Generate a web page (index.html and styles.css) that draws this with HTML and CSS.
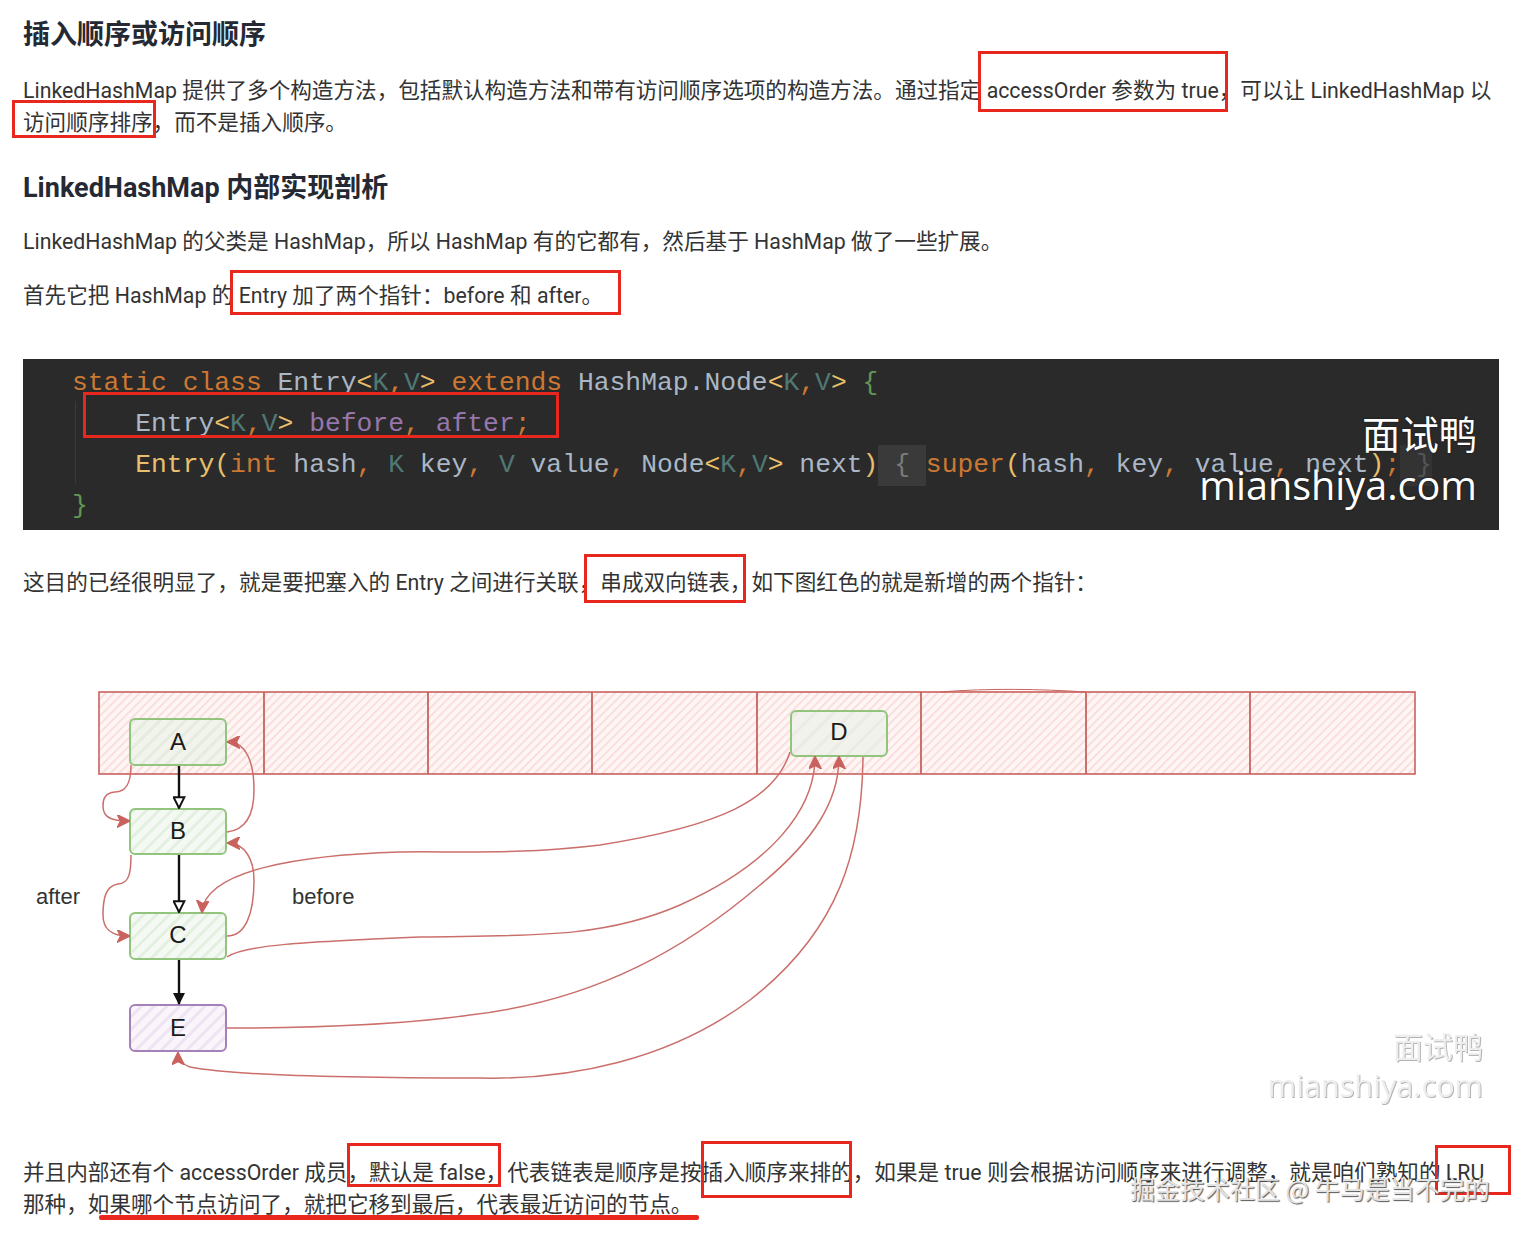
FILE: index.html
```html
<!DOCTYPE html>
<html lang="zh-CN">
<head>
<meta charset="utf-8">
<title>LinkedHashMap</title>
<link rel="stylesheet" href="styles.css">
</head>
<body>
<main class="article">
  <h3 class="heading heading-first">插入顺序或访问顺序</h3>
  <p class="para para-a"><span class="en">LinkedHashMap</span> 提供了多个构造方法，包括默认构造方法和带有访问顺序选项的构造方法。通过指定 <span class="en">accessOrder</span> 参数为 <span class="en">true</span>，可以让 <span class="en">LinkedHashMap</span> 以访问顺序排序，而不是插入顺序。</p>
  <h3 class="heading heading-second">LinkedHashMap 内部实现剖析</h3>
  <p class="para para-b"><span class="en">LinkedHashMap</span> 的父类是 <span class="en">HashMap</span>，所以 <span class="en">HashMap</span> 有的它都有，然后基于 <span class="en">HashMap</span> 做了一些扩展。</p>
  <p class="para para-c">首先它把 <span class="en">HashMap</span> 的 <span class="en">Entry</span> 加了两个指针：<span class="en">before</span> 和 <span class="en">after</span>。</p>

  <figure class="code-figure">
    <span class="code-guide"></span>
    <pre class="code"><span class="kw">static class</span> <span class="tx">Entry</span><span class="yl">&lt;</span><span class="tp">K</span><span class="kw">,</span><span class="tp">V</span><span class="yl">&gt;</span> <span class="kw">extends</span> <span class="tx">HashMap.Node</span><span class="yl">&lt;</span><span class="tp">K</span><span class="kw">,</span><span class="tp">V</span><span class="yl">&gt;</span> <span class="gr">{</span>
    <span class="tx">Entry</span><span class="yl">&lt;</span><span class="tp">K</span><span class="kw">,</span><span class="tp">V</span><span class="yl">&gt;</span> <span class="pu">before</span><span class="kw">,</span> <span class="pu">after</span><span class="kw">;</span>
    <span class="yl">Entry(</span><span class="kw">int</span> <span class="tx">hash</span><span class="kw">,</span> <span class="tp">K</span> <span class="tx">key</span><span class="kw">,</span> <span class="tp">V</span> <span class="tx">value</span><span class="kw">,</span> <span class="tx">Node</span><span class="yl">&lt;</span><span class="tp">K</span><span class="kw">,</span><span class="tp">V</span><span class="yl">&gt;</span> <span class="tx">next</span><span class="yl">)</span><span class="hl"> { </span><span class="kw">super</span><span class="yl">(</span><span class="tx">hash</span><span class="kw">,</span> <span class="tx">key</span><span class="kw">,</span> <span class="tx">value</span><span class="kw">,</span> <span class="tx">next</span><span class="yl">)</span><span class="kw">;</span><span class="hl hl-end"> }</span>
<span class="gr">}</span></pre>
    <div class="wm-code">
      <span class="wm-code-cn">面试鸭</span>
      <span class="wm-code-en">mianshiya.com</span>
    </div>
  </figure>

  <p class="para para-d">这目的已经很明显了，就是要把塞入的 <span class="en">Entry</span> 之间进行关联，串成双向链表，如下图红色的就是新增的两个指针：</p>

  <figure class="diagram-figure">
    <svg class="diagram" viewBox="23 620 1476 520" width="1476" height="520" xmlns="http://www.w3.org/2000/svg">
      <defs>
        <pattern id="hatch-red" width="6" height="6" patternUnits="userSpaceOnUse" patternTransform="rotate(-45)">
          <rect width="6" height="6" fill="#fef6f5"/>
          <rect width="6" height="1.6" fill="#fad9d7"/>
        </pattern>
        <pattern id="hatch-green" width="9" height="9" patternUnits="userSpaceOnUse" patternTransform="rotate(-45)">
          <rect width="9" height="9" fill="#f5f9f3"/>
          <rect width="9" height="3" fill="#e3f0e0"/>
        </pattern>
        <pattern id="hatch-purple" width="9" height="9" patternUnits="userSpaceOnUse" patternTransform="rotate(-45)">
          <rect width="9" height="9" fill="#f9f5fb"/>
          <rect width="9" height="3" fill="#eee3f2"/>
        </pattern>
        <pattern id="hatch-a" width="9" height="9" patternUnits="userSpaceOnUse" patternTransform="rotate(-45)">
          <rect width="9" height="9" fill="#f1f3ec"/>
          <rect width="9" height="3" fill="#e5ecdf"/>
        </pattern>
        <pattern id="hatch-d" width="13" height="13" patternUnits="userSpaceOnUse" patternTransform="rotate(-45)">
          <rect width="13" height="13" fill="#f2f2ec"/>
          <rect width="13" height="3" fill="#ebebe3"/>
        </pattern>
        <marker id="arrow-red" viewBox="0 0 12 12" refX="11" refY="6" markerWidth="13" markerHeight="13" markerUnits="userSpaceOnUse" orient="auto">
          <path d="M0 0 L12 6 L0 12 L3 6 Z" fill="#c9625e" stroke="#c9625e"/>
        </marker>
        <marker id="arrow-open" viewBox="0 0 12 12" refX="11" refY="6" markerWidth="13" markerHeight="13" markerUnits="userSpaceOnUse" orient="auto">
          <path d="M1 1 L11 6 L1 11 Z" fill="#fff" stroke="#111" stroke-width="1.8"/>
        </marker>
        <marker id="arrow-black" viewBox="0 0 12 12" refX="11" refY="6" markerWidth="12" markerHeight="12" markerUnits="userSpaceOnUse" orient="auto">
          <path d="M0 0 L12 6 L0 12 Z" fill="#111"/>
        </marker>
      </defs>

      <rect class="cell" x="99" y="692" width="1316" height="82"/>
      <path class="cell-lines" d="M264 692V774M428 692V774M592 692V774M757 692V774M921 692V774M1086 692V774M1250 692V774"/>
      <path class="cell-scribble" d="M940 692C990 688 1040 689 1086 692"/>

      <rect class="node node-a" x="130" y="719" width="96" height="46" rx="5"/>
      <rect class="node node-g" x="130" y="809" width="96" height="45" rx="5"/>
      <rect class="node node-g" x="130" y="913" width="96" height="46" rx="5"/>
      <rect class="node node-p" x="130" y="1005" width="96" height="46" rx="5"/>
      <rect class="node node-d" x="791" y="711" width="96" height="45" rx="5"/>

      <text class="node-label" x="178" y="750">A</text>
      <text class="node-label" x="178" y="839">B</text>
      <text class="node-label" x="178" y="943">C</text>
      <text class="node-label" x="178" y="1036">E</text>
      <text class="node-label" x="839" y="740">D</text>
      <text class="side-label" x="36" y="904">after</text>
      <text class="side-label" x="292" y="904">before</text>

      <path class="edge-black" d="M179 766V808" marker-end="url(#arrow-open)"/>
      <path class="edge-black" d="M179 855V912" marker-end="url(#arrow-open)"/>
      <path class="edge-black" d="M179 960V1004" marker-end="url(#arrow-black)"/>

      <path class="edge" d="M131 765C131 780 128 792 115 792C104 793 103 800 103 806C103 818 112 821 129 821" marker-end="url(#arrow-red)"/>
      <path class="edge" d="M227 832C245 830 254 815 254 790C254 760 245 742 228 742" marker-end="url(#arrow-red)"/>
      <path class="edge" d="M131 855C131 870 130 884 118 884C105 886 103 900 103 915C103 930 112 936 129 936" marker-end="url(#arrow-red)"/>
      <path class="edge" d="M227 936C245 936 254 915 254 880C254 860 245 843 228 843" marker-end="url(#arrow-red)"/>
      <path class="edge" d="M790 752C775 800 720 826 600 845C520 855 450 851 400 852C300 855 205 870 202 912" marker-end="url(#arrow-red)"/>
      <path class="edge" d="M227 957C245 945 300 942 420 937C520 935 600 940 680 905C770 865 815 810 815 757" marker-end="url(#arrow-red)"/>
      <path class="edge" d="M227 1028C320 1028 400 1025 470 1015C600 1000 690 945 760 885C815 840 839 800 839 757" marker-end="url(#arrow-red)"/>
      <path class="edge" d="M863 757C862 850 840 930 750 1000C670 1060 570 1080 480 1078C350 1078 230 1075 190 1067C180 1063 178 1060 178 1053" marker-end="url(#arrow-red)"/>

      <text class="wm-light wm-light-cn" x="1483" y="1058">面试鸭</text>
      <text class="wm-light wm-light-en" x="1483" y="1097">mianshiya.com</text>
    </svg>
  </figure>

  <p class="para para-e">并且内部还有个 <span class="en">accessOrder</span> 成员，默认是 <span class="en">false</span>，代表链表是顺序是按插入顺序来排的，如果是 <span class="en">true</span> 则会根据访问顺序来进行调整，就是咱们熟知的 <span class="en">LRU</span> 那种，如果哪个节点访问了，就把它移到最后，代表最近访问的节点。</p>
</main>

<div class="mark mark-1"></div>
<div class="mark mark-2"></div>
<div class="mark mark-3"></div>
<div class="mark mark-4"></div>
<div class="mark mark-5"></div>
<div class="mark mark-6"></div>
<div class="mark mark-7"></div>
<div class="mark mark-8"></div>
<div class="underline-mark"></div>
<div class="wm-juejin">掘金技术社区 @ 牛马是当不完的</div>
</body>
</html>
```

FILE: styles.css
```css
* { box-sizing: border-box; }

html, body { margin: 0; padding: 0; background: #fff; }

body {
  position: relative;
  width: 1521px;
  height: 1235px;
  overflow: hidden;
  font-family: Roboto, "Noto Sans CJK SC", sans-serif;
  color: #333;
}

.article { padding: 0 22px 0 23px; }

.heading {
  margin: 0;
  font-size: 27px;
  line-height: 38px;
  font-weight: 700;
  color: #252933;
}
.heading-first { padding-top: 16px; }
.heading-second { margin-top: 30px; }

.para {
  margin: 0;
  font-size: 21.6px;
  line-height: 32px;
  color: #333;
}
.en { font-size: 21.3px; }
.para-a { margin-top: 21px; }
.para-b { margin-top: 19px; }
.para-c { margin-top: 22px; }
.para-d { margin-top: 37px; }
.para-e { margin-top: 17px; }

.code-figure {
  position: relative;
  margin: 47px 0 0;
  height: 171px;
  background: #2a2a2a;
  overflow: hidden;
}
.code-guide {
  position: absolute;
  left: 52px;
  top: 42px;
  height: 82px;
  width: 1px;
  background: #3b3b3b;
}
.code {
  margin: 0;
  padding: 4px 0 0 49px;
  font-family: "Liberation Mono", monospace;
  font-size: 26.35px;
  line-height: 41px;
  white-space: pre;
}
.kw { color: #cc7832; }
.tx { color: #a9b7c6; }
.yl { color: #e8bf6a; }
.tp { color: #507874; }
.pu { color: #9876aa; }
.gr { color: #629755; }
.hl { background: #3a3a3a; color: #7b7b7b; display: inline-block; line-height: 41px; }
.hl-end { background: #333; color: #555; }

.wm-code {
  position: absolute;
  right: 22px;
  top: 54px;
  display: flex;
  flex-direction: column;
  align-items: flex-end;
  color: #fff;
  text-shadow: 0 0 2px rgba(0, 0, 0, .6);
}
.wm-code-cn { font-size: 38.3px; line-height: 46px; }
.wm-code-en { font-size: 39.6px; line-height: 52px; font-family: "Open Sans", sans-serif; }

.diagram-figure { margin: 21px 0 0; height: 520px; }
.diagram { display: block; }

.cell { fill: url(#hatch-red); stroke: #c9625e; stroke-width: 1.6; }
.cell-lines { fill: none; stroke: #c9625e; stroke-width: 1.8; }
.cell-scribble { fill: none; stroke: #c9625e; stroke-width: 1; }

.node { stroke-width: 2; }
.node-a { fill: url(#hatch-a); stroke: #93c47d; }
.node-g { fill: url(#hatch-green); stroke: #93c47d; }
.node-p { fill: url(#hatch-purple); stroke: #a680b8; }
.node-d { fill: url(#hatch-d); stroke: #93c47d; }

.node-label {
  font-family: "Liberation Sans", sans-serif;
  font-size: 24px;
  fill: #1a1a1a;
  text-anchor: middle;
}
.side-label {
  font-family: "Liberation Sans", sans-serif;
  font-size: 22px;
  fill: #333;
}

.edge { fill: none; stroke: #cb6f6b; stroke-width: 1.5; }
.edge-black { fill: none; stroke: #111; stroke-width: 2.4; }

.wm-light {
  fill: #eeeeee;
  text-anchor: end;
  filter: drop-shadow(1px 1px 0 #b5b5b5);
}
.wm-light-cn { font-family: "Noto Sans CJK SC", sans-serif; font-size: 30px; }
.wm-light-en { font-family: "Open Sans", sans-serif; font-size: 30.7px; }

.mark {
  position: absolute;
  border: 3px solid #e8281e;
}
.mark-1 { left: 978px; top: 51px; width: 250px; height: 61px; }
.mark-2 { left: 12px; top: 100px; width: 144px; height: 38px; }
.mark-3 { left: 230px; top: 270px; width: 391px; height: 45px; }
.mark-4 { left: 83px; top: 392px; width: 476px; height: 46px; }
.mark-5 { left: 584px; top: 554px; width: 162px; height: 49px; }
.mark-6 { left: 347px; top: 1143px; width: 154px; height: 44px; }
.mark-7 { left: 701px; top: 1141px; width: 151px; height: 57px; }
.mark-8 { left: 1435px; top: 1145px; width: 76px; height: 50px; }

.underline-mark {
  position: absolute;
  left: 99px;
  top: 1215px;
  width: 600px;
  height: 5px;
  border-radius: 2px;
  background: #e8281e;
}

.wm-juejin {
  position: absolute;
  left: 1130px;
  top: 1170px;
  font-family: "Noto Sans CJK SC", sans-serif;
  font-size: 25px;
  line-height: 36px;
  white-space: nowrap;
  color: #e4e4e4;
  text-shadow: 1px 1px 1px #555;
}
```
